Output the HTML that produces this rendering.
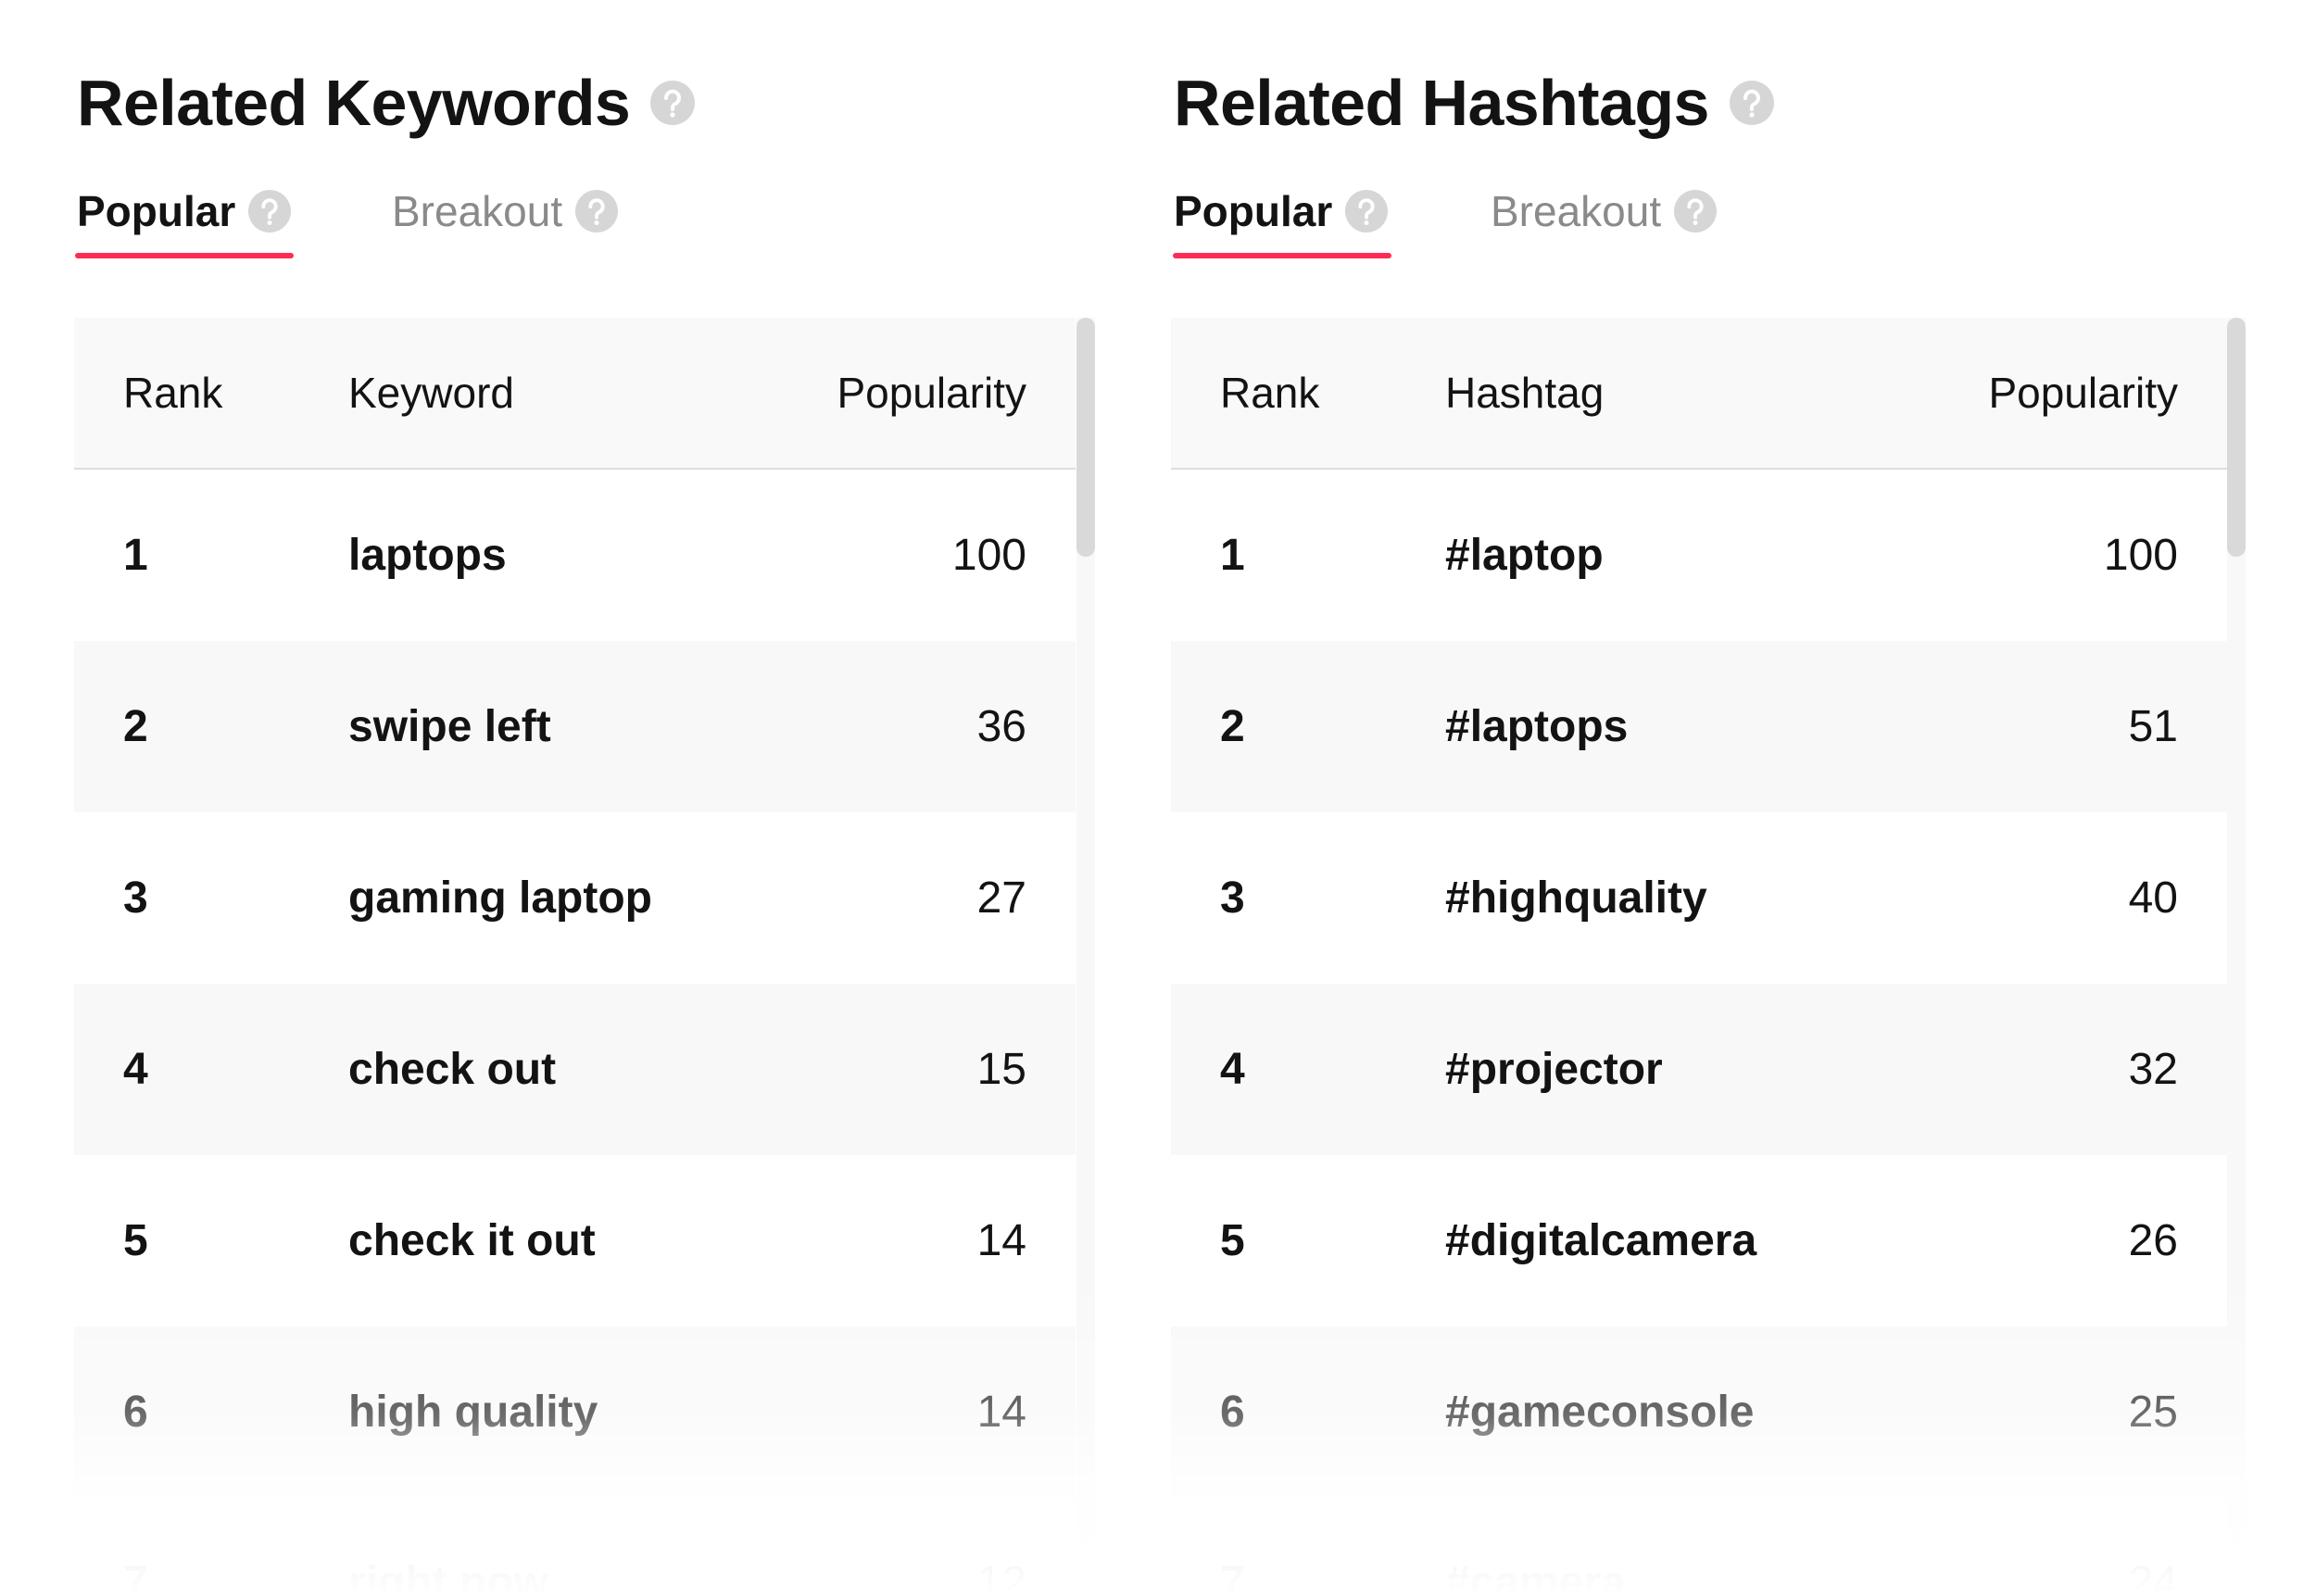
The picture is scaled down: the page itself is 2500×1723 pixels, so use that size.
<!DOCTYPE html>
<html><head><meta charset="utf-8"><style>
*{margin:0;padding:0;box-sizing:border-box}
html,body{width:2500px;height:1723px;background:#fff;overflow:hidden;font-family:"Liberation Sans",Arial,sans-serif;color:#131313}
#wrap{position:relative;width:2500px;height:1723px;overflow:hidden;background:#fff}
.p{position:absolute;top:0;height:1723px;width:1170px;overflow:hidden}
.title{position:absolute;left:3px;top:76px;font-size:70px;line-height:70px;font-weight:700;white-space:nowrap;display:flex;align-items:center;letter-spacing:-0.6px}
.tab{position:absolute;top:205px;font-size:46px;line-height:46px;white-space:nowrap;display:flex;align-items:center}
.help{display:inline-block;margin-left:14px}
.ul{position:absolute;left:1px;top:273px;width:236px;height:6px;border-radius:3px;background:#fe2c55}
.tbl{position:absolute;left:0;top:343px;width:1081px}
.hd{height:164px;background:#f9f9f9;border-bottom:2px solid #dedede;position:relative;font-size:46px}
.r{height:185px;position:relative;font-size:48px;font-weight:700;overflow:hidden}
.r.last{height:104px}
.c1,.c2,.c3{position:absolute;top:50%;transform:translateY(-50%);line-height:1;white-space:nowrap}
.r.last .c1,.r.last .c2,.r.last .c3{top:92px}
.c1{left:53px}.c2{left:296px}.c3{right:53px;font-weight:400}
.hd .c1,.hd .c2,.hd .c3{font-weight:400}
.track{position:absolute;left:1082px;top:343px;width:20px;height:1347px;background:#f8f8f8}
.thumb{position:absolute;left:1082px;top:343px;width:20px;height:258px;border-radius:10px;background:#d9d9d9}
.fade{position:absolute;left:0;top:1400px;width:2500px;height:323px;background:linear-gradient(to bottom,rgba(255,255,255,0.12) 0px,rgba(255,255,255,0.38) 130px,rgba(255,255,255,0.9) 210px,rgba(255,255,255,0.96) 280px,#fff 323px)}
</style></head><body><div id="wrap">

<div class="p" style="left:80px">
  <div class="title">Related Keywords<svg class="help" style="margin-left:22px" width="48" height="48" viewBox="0 0 48 48"><circle cx="24" cy="24" r="24" fill="#d6d6d6"/><path d="M17 19a7 7 0 1 1 10 6c-2 1-3 2-3 4v2" fill="none" stroke="#fff" stroke-width="4" stroke-linecap="round"/><circle cx="24" cy="37" r="2.6" fill="#fff"/></svg></div>
  <div class="tab" style="left:3px;font-weight:700">Popular<svg class="help" width="46" height="46" viewBox="0 0 48 48"><circle cx="24" cy="24" r="24" fill="#d6d6d6"/><path d="M17 19a7 7 0 1 1 10 6c-2 1-3 2-3 4v2" fill="none" stroke="#fff" stroke-width="4" stroke-linecap="round"/><circle cx="24" cy="37" r="2.6" fill="#fff"/></svg></div>
  <div class="tab" style="left:343px;color:#8a8a8a">Breakout<svg class="help" width="46" height="46" viewBox="0 0 48 48"><circle cx="24" cy="24" r="24" fill="#d6d6d6"/><path d="M17 19a7 7 0 1 1 10 6c-2 1-3 2-3 4v2" fill="none" stroke="#fff" stroke-width="4" stroke-linecap="round"/><circle cx="24" cy="37" r="2.6" fill="#fff"/></svg></div>
  <div class="ul"></div>
  <div class="track"></div><div class="thumb"></div>
  <div class="tbl">
    <div class="hd"><span class="c1">Rank</span><span class="c2">Keyword</span><span class="c3">Popularity</span></div>
    <div>
      <div class="r" style="background:#fff"><span class="c1">1</span><span class="c2">laptops</span><span class="c3">100</span></div>
      <div class="r" style="background:#f8f8f8"><span class="c1">2</span><span class="c2">swipe left</span><span class="c3">36</span></div>
      <div class="r" style="background:#fff"><span class="c1">3</span><span class="c2">gaming laptop</span><span class="c3">27</span></div>
      <div class="r" style="background:#f8f8f8"><span class="c1">4</span><span class="c2">check out</span><span class="c3">15</span></div>
      <div class="r" style="background:#fff"><span class="c1">5</span><span class="c2">check it out</span><span class="c3">14</span></div>
      <div class="r" style="background:#f8f8f8"><span class="c1">6</span><span class="c2">high quality</span><span class="c3">14</span></div>
      <div class="r last" style="background:#fff"><span class="c1">7</span><span class="c2">right now</span><span class="c3">12</span></div>
    </div>
  </div>
</div>

<div class="p" style="left:1264px">
  <div class="title">Related Hashtags<svg class="help" style="margin-left:22px" width="48" height="48" viewBox="0 0 48 48"><circle cx="24" cy="24" r="24" fill="#d6d6d6"/><path d="M17 19a7 7 0 1 1 10 6c-2 1-3 2-3 4v2" fill="none" stroke="#fff" stroke-width="4" stroke-linecap="round"/><circle cx="24" cy="37" r="2.6" fill="#fff"/></svg></div>
  <div class="tab" style="left:3px;font-weight:700">Popular<svg class="help" width="46" height="46" viewBox="0 0 48 48"><circle cx="24" cy="24" r="24" fill="#d6d6d6"/><path d="M17 19a7 7 0 1 1 10 6c-2 1-3 2-3 4v2" fill="none" stroke="#fff" stroke-width="4" stroke-linecap="round"/><circle cx="24" cy="37" r="2.6" fill="#fff"/></svg></div>
  <div class="tab" style="left:345px;color:#8a8a8a">Breakout<svg class="help" width="46" height="46" viewBox="0 0 48 48"><circle cx="24" cy="24" r="24" fill="#d6d6d6"/><path d="M17 19a7 7 0 1 1 10 6c-2 1-3 2-3 4v2" fill="none" stroke="#fff" stroke-width="4" stroke-linecap="round"/><circle cx="24" cy="37" r="2.6" fill="#fff"/></svg></div>
  <div class="ul" style="left:2px"></div>
  <div class="track" style="left:1140px"></div><div class="thumb" style="left:1140px"></div>
  <div class="tbl" style="width:1140px">
    <div class="hd"><span class="c1">Rank</span><span class="c2">Hashtag</span><span class="c3">Popularity</span></div>
    <div>
      <div class="r" style="background:#fff"><span class="c1">1</span><span class="c2">#laptop</span><span class="c3">100</span></div>
      <div class="r" style="background:#f8f8f8"><span class="c1">2</span><span class="c2">#laptops</span><span class="c3">51</span></div>
      <div class="r" style="background:#fff"><span class="c1">3</span><span class="c2">#highquality</span><span class="c3">40</span></div>
      <div class="r" style="background:#f8f8f8"><span class="c1">4</span><span class="c2">#projector</span><span class="c3">32</span></div>
      <div class="r" style="background:#fff"><span class="c1">5</span><span class="c2">#digitalcamera</span><span class="c3">26</span></div>
      <div class="r" style="background:#f8f8f8"><span class="c1">6</span><span class="c2">#gameconsole</span><span class="c3">25</span></div>
      <div class="r last" style="background:#fff"><span class="c1">7</span><span class="c2">#camera</span><span class="c3">24</span></div>
    </div>
  </div>
</div>

<div class="fade"></div>
</div></body></html>
